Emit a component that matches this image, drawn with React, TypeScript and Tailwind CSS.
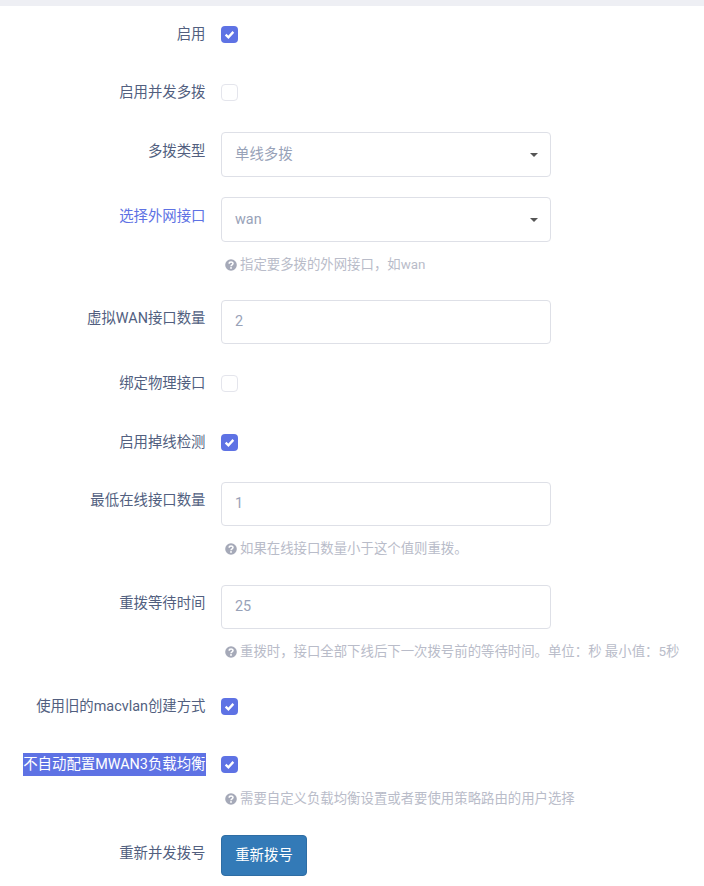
import React from 'react'

const fontStack = '[font-family:"Roboto","Noto_Sans_CJK_SC",sans-serif]'

function Check({ on }: { on?: boolean }) {
  if (!on) {
    return <span className="block w-[17px] h-[17px] rounded-[4px] border border-[#e4e5ec] bg-white" />
  }
  return (
    <span className="flex items-center justify-center w-[17px] h-[17px] rounded-[4px] bg-[#5e72e4]">
      <svg width="11" height="11" viewBox="0 0 12 12">
        <path d="M1.8 6.2 L4.8 9 L10.2 3.2" fill="none" stroke="white" strokeWidth="2.6" />
      </svg>
    </span>
  )
}

function Help({ text, className }: { text: string; className: string }) {
  return (
    <div className={`flex items-center h-[18px] ml-[225px] text-[13.4px] whitespace-nowrap text-[#b9bcc9] ${className}`}>
      <svg width="12" height="12" viewBox="0 0 12 12" className="mr-[3px] shrink-0">
        <circle cx="6" cy="6" r="5.8" fill="#a5a9b8" />
        <path d="M4.2 4.7 C4.2 2.5 8 2.5 8 4.6 C8 5.9 6 5.8 6 7.3" fill="none" stroke="white" strokeWidth="1.5" />
        <rect x="5.2" y="8.1" width="1.6" height="1.7" fill="white" />
      </svg>
      {text}
    </div>
  )
}

function Label({ children, className = '' }: { children: React.ReactNode; className?: string }) {
  return (
    <div className={`w-[205.5px] shrink-0 mr-[15.5px] text-right text-[14.4px] leading-[20px] whitespace-nowrap ${className}`}>
      {children}
    </div>
  )
}

function CheckRow({ label, on, className }: { label: React.ReactNode; on?: boolean; className: string }) {
  return (
    <div className={`flex items-center h-[17px] ${className}`}>
      <Label>{label}</Label>
      <Check on={on} />
    </div>
  )
}

function Field({ label, value, select, h, className, labelClass }: {
  label: string
  value: string
  select?: boolean
  h: string
  className: string
  labelClass: string
}) {
  return (
    <div className={`flex items-start ${className}`}>
      <Label className={labelClass}>{label}</Label>
      <div className={`flex items-center justify-between w-[330px] ${h} pl-[13px] pr-[13px] rounded-[4px] border border-[#dee0e7] bg-white text-[14.4px] text-[#98a2b8]`}>
        <span>{value}</span>
        {select && <span className="w-0 h-0 border-x-[4px] border-x-transparent border-t-[4px] border-t-[#555] mr-[-1px]" />}
      </div>
    </div>
  )
}

export default function App() {
  return (
    <div className={`relative w-[704px] h-[886px] overflow-hidden bg-white text-[#525f7f] ${fontStack}`}>
      <div className="h-[6px] bg-[#eeeff4]" />

      <CheckRow label="启用" on className="mt-[20px]" />
      <CheckRow label="启用并发多拨" className="mt-[41px]" />
      <Field label="多拨类型" value="单线多拨" select h="h-[45px]" className="mt-[31px]" labelClass="mt-[10px]" />
      <Field label="选择外网接口" value="wan" select h="h-[45px]" className="mt-[20px]" labelClass="mt-[10px] text-[#5e72e4]" />
      <Help text="指定要多拨的外网接口，如wan" className="mt-[14px]" />
      <Field label="虚拟WAN接口数量" value="2" h="h-[44px]" className="mt-[26px]" labelClass="mt-[9px]" />
      <CheckRow label="绑定物理接口" className="mt-[31px]" />
      <CheckRow label="启用掉线检测" on className="mt-[42px]" />
      <Field label="最低在线接口数量" value="1" h="h-[44px]" className="mt-[31px]" labelClass="mt-[9px]" />
      <Help text="如果在线接口数量小于这个值则重拨。" className="mt-[14px]" />
      <Field label="重拨等待时间" value="25" h="h-[44px]" className="mt-[27px]" labelClass="mt-[9px]" />
      <Help text="重拨时，接口全部下线后下一次拨号前的等待时间。单位：秒 最小值：5秒" className="mt-[14px]" />
      <CheckRow label="使用旧的macvlan创建方式" on className="mt-[37px]" />
      <CheckRow
        label={<span className="bg-[#5e72e4] text-white py-[1px] inline-block leading-[21px]">不自动配置MWAN3负载均衡</span>}
        on
        className="mt-[41px]"
      />
      <Help text="需要自定义负载均衡设置或者要使用策略路由的用户选择" className="mt-[17px]" />
      <div className="flex items-start mt-[27px]">
        <Label className="mt-[9px]">重新并发拨号</Label>
        <button className="w-[86px] h-[41px] rounded-[4px] border border-[#2e6da4] bg-[#337ab7] text-white text-[14.4px]">
          重新拨号
        </button>
      </div>
    </div>
  )
}
